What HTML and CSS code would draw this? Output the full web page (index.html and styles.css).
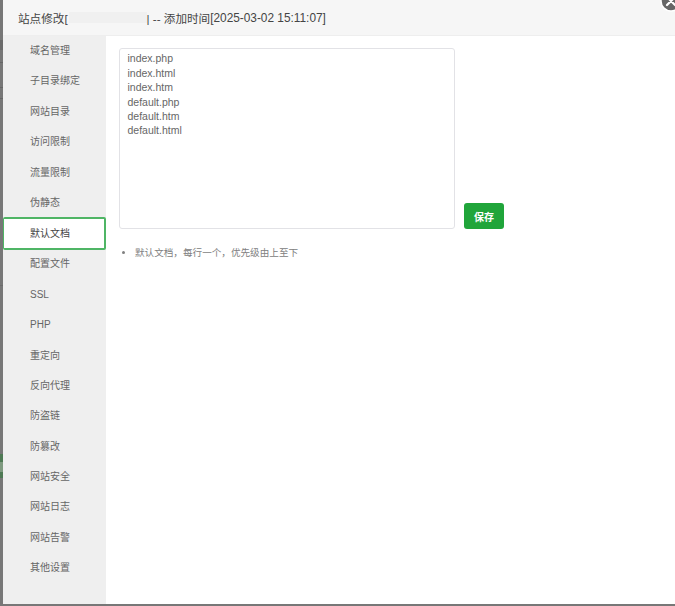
FILE: index.html
```html
<!DOCTYPE html>
<html lang="zh-CN">
<head>
<meta charset="utf-8">
<title>站点修改</title>
<link rel="stylesheet" href="styles.css">
</head>
<body>
<div class="backdrop">
  <div class="stripe stripe-green"></div>
  <div class="stripe stripe-label"></div>
</div>
<section class="modal">
  <header class="modal-title">
    <span>站点修改[</span><span class="blurred"></span><span>| -- 添加时间</span><span class="stamp">[2025-03-02 15:11:07]</span>
  </header>
  <button class="close" aria-label="关闭"><svg width="24" height="24" viewBox="0 0 24 24"><circle cx="12" cy="12" r="10" fill="#666" stroke="#fff" stroke-width="1.5"/><path d="M8 8l8 8M16 8l-8 8" stroke="#fff" stroke-width="2.2" stroke-linecap="round"/></svg></button>
  <div class="modal-body">
    <nav class="side">
      <a>域名管理</a>
      <a>子目录绑定</a>
      <a>网站目录</a>
      <a>访问限制</a>
      <a>流量限制</a>
      <a>伪静态</a>
      <a class="active">默认文档</a>
      <a>配置文件</a>
      <a>SSL</a>
      <a>PHP</a>
      <a>重定向</a>
      <a>反向代理</a>
      <a>防盗链</a>
      <a>防篡改</a>
      <a>网站安全</a>
      <a>网站日志</a>
      <a>网站告警</a>
      <a>其他设置</a>
    </nav>
    <main class="content">
      <div class="editor">
        <textarea class="docs" spellcheck="false">index.php
index.html
index.htm
default.php
default.htm
default.html</textarea>
        <button class="save">保存</button>
      </div>
      <ul class="tips">
        <li>默认文档，每行一个，优先级由上至下</li>
      </ul>
    </main>
  </div>
</section>
</body>
</html>
```
FILE: styles.css
```css
* { box-sizing: border-box; }
html, body { margin: 0; height: 100%; }
body {
  position: relative;
  width: 675px;
  height: 606px;
  overflow: hidden;
  background: #777;
  font-family: "Liberation Sans", "Noto Sans CJK SC", sans-serif;
  color: #555;
}
.backdrop {
  position: absolute;
  inset: 0;
  background:
    linear-gradient(#6a6a6a, #6a6a6a) 0 40px / 3px 10px no-repeat,
    linear-gradient(#666, #666) 0 62px / 3px 1px no-repeat,
    linear-gradient(#666, #666) 0 87px / 3px 1px no-repeat,
    linear-gradient(#666, #666) 0 98px / 3px 1px no-repeat,
    linear-gradient(#6c6c6c, #6c6c6c) 0 285px / 3px 1px no-repeat;
}
.stripe { position: absolute; left: 0; width: 3px; }
.stripe-green { top: 454px; height: 24px; background: #4f7a55; }
.stripe-label { top: 462px; height: 10px; background: #7f9a80; }
.modal {
  position: absolute;
  left: 3px;
  top: 0;
  width: 672px;
  height: 604px;
  display: flex;
  flex-direction: column;
  background: #fff;
}
.modal-title {
  flex: none;
  height: 36px;
  display: flex;
  align-items: center;
  padding: 0 0 0 15px;
  background: #f6f6f6;
  border-bottom: 1px solid #eee;
  font-size: 11.6px;
  color: #444;
  white-space: nowrap;
}
.blurred {
  width: 78px;
  height: 11px;
  margin: 0 0 0 1px;
  background: #f0f0f0;
}
.stamp { font-size: 11.85px; }
.close {
  position: absolute;
  right: -8px;
  top: -11px;
  width: 24px;
  height: 24px;
  padding: 0;
  border: 0;
  background: none;
}
.close svg { display: block; }
.modal-body { flex: 1; display: flex; min-height: 0; }
.side {
  flex: none;
  width: 103px;
  background: #efefef;
}
.side a {
  display: block;
  height: 30.4px;
  line-height: 30.4px;
  padding-left: 27px;
  font-size: 10px;
  color: #666;
}
.side a.active {
  height: 33px;
  margin: -1.3px 0 -0.7px;
  background: #fff;
  border: 2px solid #4fb565;
  border-left-width: 1px;
  border-radius: 2px;
  line-height: 29px;
  padding-left: 26px;
  color: #444;
}
.content { flex: 1; padding: 12px 0 0 13px; }
.editor { display: flex; align-items: flex-end; gap: 9px; }
.docs {
  display: block;
  width: 336px;
  height: 181px;
  padding: 2.3px 7.5px;
  border: 1px solid #e2e2e6;
  border-radius: 3px;
  background: #fff;
  font: 10.5px/14.4px "Liberation Sans", sans-serif;
  color: #666;
  resize: none;
  outline: none;
}
.save {
  width: 40px;
  height: 26px;
  border: 0;
  border-radius: 3px;
  background: #20a53a;
  color: #fff;
  font: bold 10px "Liberation Sans", "Noto Sans CJK SC", sans-serif;
  padding: 0;
}
.tips {
  margin: 17px 0 0;
  padding-left: 16px;
  font-size: 9.6px;
  line-height: 14px;
  color: #808080;
}
```
